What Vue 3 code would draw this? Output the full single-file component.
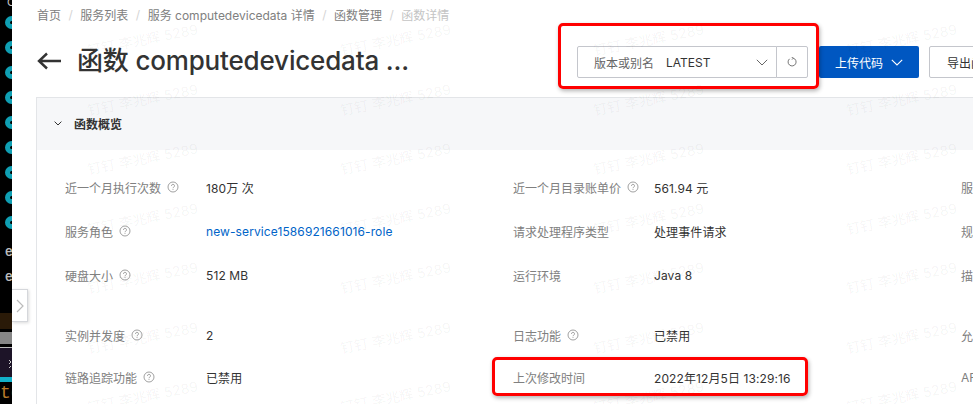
<template>
  <div class="page">
    <aside class="strip">
      <span class="strip-top">C</span>
      <span v-for="n in 9" :key="n" class="ring"></span>
      <span class="strip-e first">e</span>
      <span class="strip-e">e</span>
      <span class="block brown"></span>
      <span class="block grey"></span>
      <span class="block purple">
        <svg width="12" height="29" viewBox="0 0 12 29" fill="none" stroke="#ccc" stroke-width="1">
          <path d="M9 12l2 2-2 2M11 18l-2 2" />
        </svg>
      </span>
      <span class="block cyan"></span>
      <span class="strip-code">tc</span>
    </aside>

    <main class="main">
      <nav class="crumbs">
        <template v-for="(item, i) in crumbs" :key="item">
          <span :class="{ current: i === crumbs.length - 1 }">{{ item }}</span>
          <i v-if="i < crumbs.length - 1" class="sep">/</i>
        </template>
      </nav>

      <header class="head">
        <svg class="back" width="24" height="18" viewBox="0 0 24 18" fill="none" stroke="#333" stroke-width="2.4">
          <path d="M24 9H2M10 1.5 2 9l8 7.5" />
        </svg>
        <h1 class="title">函数 computedevicedata ...</h1>
        <div class="actions">
          <div class="select">
            <span class="select-label">版本或别名</span>
            <span class="select-value">LATEST</span>
            <svg class="select-arrow" width="12" height="7" viewBox="0 0 12 7" fill="none" stroke="#666" stroke-width="1">
              <path d="M.8.8 6 6 11.2.8" />
            </svg>
          </div>
          <button class="refresh">
            <svg width="10" height="10" viewBox="0 0 10 10" fill="none" stroke="#666" stroke-width=".9">
              <path d="M6.2 1.1A4 4 0 1 1 2.6 1.8" />
              <path d="M4.6 .2 6.4 1.2 5 2.6" />
            </svg>
          </button>
          <button class="primary">
            上传代码
            <svg width="12" height="7" viewBox="0 0 12 7" fill="none" stroke="#fff" stroke-width="1.1">
              <path d="M.8.8 6 6 11.2.8" />
            </svg>
          </button>
          <button class="plain">导出函数</button>
        </div>
      </header>

      <section class="panel">
        <div class="panel-head">
          <svg width="8" height="5" viewBox="0 0 8 5" fill="none" stroke="#333" stroke-width="1">
            <path d="M.6.6 4 4 7.4.6" />
          </svg>
          <span>函数概览</span>
        </div>
        <div class="grid">
          <div v-for="item in items" :key="item.label" class="cell">
            <div class="label">
              {{ item.label }}
              <svg v-if="item.tip" class="tip" width="12" height="12" viewBox="0 0 12 12" fill="none" stroke="#888" stroke-width=".8">
                <circle cx="6" cy="6" r="5" />
                <path d="M4.5 4.9A1.5 1.5 0 1 1 6.6 6.2c-.4.2-.6.5-.6 1" />
                <path d="M6 8.2v.8" />
              </svg>
            </div>
            <div class="value" :class="{ link: item.link }">{{ item.value }}</div>
          </div>
        </div>
      </section>
    </main>

    <button class="collapse">
      <svg width="8" height="14" viewBox="0 0 8 14" fill="none" stroke="#bbb" stroke-width="1.2">
        <path d="M1 1l6 6-6 6" />
      </svg>
    </button>

    <div class="marks">
      <span v-for="m in marks" :key="m" class="mark">钉钉 李兆辉 5289</span>
    </div>

    <div class="callout top"></div>
    <div class="callout bottom"></div>
  </div>
</template>

<script setup>
const crumbs = ['首页', '服务列表', '服务 computedevicedata 详情', '函数管理', '函数详情']

// 第三列被窗口裁掉，只露出开头
const items = [
  { label: '近一个月执行次数', tip: true, value: '180万 次' },
  { label: '近一个月目录账单价', tip: true, value: '561.94 元' },
  { label: '服务名称', value: 'computedevicedata' },
  { label: '服务角色', tip: true, value: 'new-service1586921661016-role', link: true },
  { label: '请求处理程序类型', value: '处理事件请求' },
  { label: '规格', value: '1 vCPU' },
  { label: '硬盘大小', tip: true, value: '512 MB' },
  { label: '运行环境', value: 'Java 8' },
  { label: '描述信息', value: '-' },
  { label: '实例并发度', tip: true, value: '2' },
  { label: '日志功能', tip: true, value: '已禁用' },
  { label: '允许访问', value: '是' },
  { label: '链路追踪功能', tip: true, value: '已禁用' },
  { label: '上次修改时间', value: '2022年12月5日 13:29:16' },
  { label: 'ARN', value: '-' }
]

const marks = Array.from({ length: 28 }, (_, i) => i)
</script>

<style>
html,
body {
  margin: 0;
  background: #fff;
  overflow: hidden;
}
</style>

<style scoped>
.page {
  position: relative;
  display: flex;
  width: 973px;
  height: 404px;
  overflow: hidden;
  font-family: Inter, "Noto Sans CJK SC", sans-serif;
  font-size: 12px;
  color: #333;
}

.strip {
  flex: 0 0 12px;
  position: relative;
  display: flex;
  flex-direction: column;
  align-items: flex-start;
  overflow: hidden;
  background: #000;
}

.strip-top {
  height: 4px;
  margin-left: 7px;
  font-size: 11px;
  line-height: 4px;
  color: #ccc;
}

.ring {
  flex: none;
  box-sizing: border-box;
  width: 13px;
  height: 13px;
  margin: 12px 0 0 5px;
  border: 5px solid #0f9fb3;
  border-radius: 50%;
}

.ring:first-of-type {
  margin-top: 11px;
}

.strip-e {
  margin: 5px 0 0 5px;
  height: 20px;
  font-size: 13px;
  font-weight: 600;
  line-height: 20px;
  color: #bbb;
}

.strip-e.first {
  margin-top: 12px;
}

.block {
  flex: none;
  width: 12px;
}

.brown {
  height: 16px;
  margin-top: 27px;
  background: #2a1a08;
}

.grey {
  height: 12px;
  margin-top: 3px;
  background: #868686;
}

.purple {
  height: 29px;
  margin-top: 3px;
  border-top: 1px solid #bbb;
  background: #1d1428;
}

.purple svg {
  display: block;
}

.cyan {
  height: 5px;
  background: #12b0c9;
}

.strip-code {
  font-family: "Liberation Mono", monospace;
  font-size: 18px;
  line-height: 23px;
  color: #b97a2a;
}

.main {
  flex: 1;
  min-width: 0;
}

.crumbs {
  display: flex;
  align-items: center;
  gap: 7.5px;
  height: 28px;
  margin-bottom: 2px;
  padding-left: 25px;
  color: #808080;
  white-space: nowrap;
}

.crumbs .current {
  color: #c4c4c4;
}

.sep {
  font-style: normal;
  color: #d5d5d5;
}

.head {
  display: flex;
  align-items: center;
  height: 62px;
  margin-bottom: 5px;
  padding-left: 25px;
}

.back {
  flex: none;
  margin-right: 16px;
}

.title {
  flex: 0 0 500px;
  margin: 0;
  font-size: 26px;
  font-weight: 500;
  letter-spacing: -.17px;
  line-height: 36px;
  white-space: nowrap;
  color: #333;
}

.actions {
  display: flex;
  flex: none;
  height: 32px;
  margin-top: 2px;
}

.select {
  box-sizing: border-box;
  display: flex;
  align-items: center;
  width: 200px;
  padding-left: 16px;
  border: 1px solid #c4c6cc;
  border-radius: 2px 0 0 2px;
}

.select-label {
  width: 72px;
  color: #666;
}

.select-arrow {
  margin-left: auto;
  margin-right: 8px;
}

button {
  box-sizing: border-box;
  font: inherit;
  height: 32px;
  padding: 0;
  background: #fff;
}

.refresh {
  width: 32px;
  margin-left: -1px;
  border: 1px solid #c4c6cc;
  border-radius: 0 2px 2px 0;
  display: flex;
  align-items: center;
  justify-content: center;
}

.primary {
  display: flex;
  align-items: center;
  justify-content: center;
  gap: 8px;
  width: 100px;
  margin-left: 11px;
  border: 0;
  border-radius: 2px;
  background: #0057c1;
  color: #fff;
}

.plain {
  width: 84px;
  margin-left: 10px;
  border: 1px solid #c4c6cc;
  border-radius: 2px;
  color: #333;
}

.panel {
  width: 1000px;
  margin-left: 24px;
  height: 400px;
  border: 1px solid #e3e5e8;
}

.panel-head {
  box-sizing: border-box;
  display: flex;
  align-items: center;
  gap: 12px;
  height: 52px;
  padding: 0 0 1px 17px;
  background: #f6f7f9;
  font-weight: 600;
}

.grid {
  display: grid;
  grid-template-columns: repeat(3, 448px);
  grid-template-rows: 44px 44px 60px 42px 40px;
  padding: 27px 0 0 28px;
}

.cell {
  display: flex;
  align-items: center;
  height: 20px;
  white-space: nowrap;
}

.label {
  display: flex;
  align-items: center;
  gap: 6px;
  width: 141px;
  color: #808080;
}

.value {
  letter-spacing: .1px;
  color: #333;
}

.link {
  color: #0064c8;
}

.collapse {
  position: absolute;
  left: 12px;
  top: 289px;
  display: flex;
  align-items: center;
  justify-content: center;
  width: 16px;
  height: 33px;
  border: 1px solid #d5d7db;
  border-left: 0;
  box-shadow: 1px 1px 3px rgba(0, 0, 0, .15);
}

.marks {
  position: absolute;
  left: 16px;
  top: 9px;
  display: grid;
  grid-template-columns: repeat(4, 253px);
  grid-auto-rows: 59.5px;
  pointer-events: none;
}

.mark {
  display: flex;
  align-items: center;
  justify-content: center;
  height: 60px;
  font-size: 14px;
  white-space: nowrap;
  color: rgba(0, 0, 0, .05);
  transform: rotate(-11deg);
}

.callout {
  position: absolute;
  box-sizing: border-box;
  border: 3px solid #f00;
  border-radius: 5px;
  box-shadow: 1px 2px 4px rgba(0, 0, 0, .3);
  pointer-events: none;
}

.callout.top {
  left: 558px;
  top: 23px;
  width: 261px;
  height: 66px;
}

.callout.bottom {
  left: 492px;
  top: 357px;
  width: 316px;
  height: 39px;
}
</style>
